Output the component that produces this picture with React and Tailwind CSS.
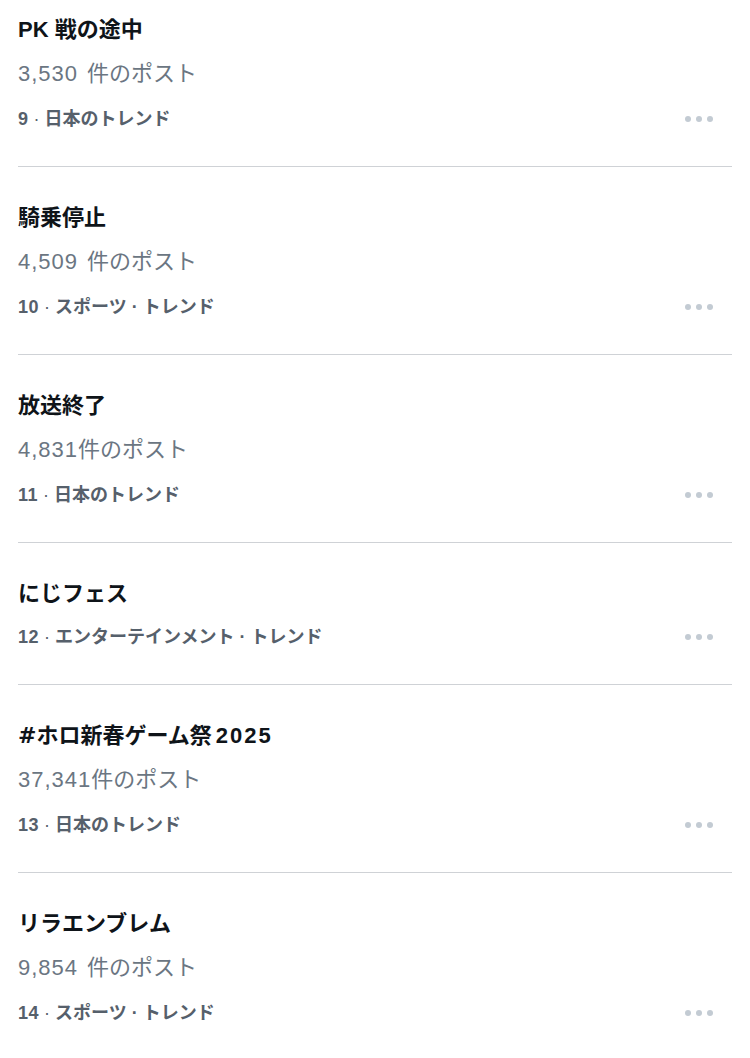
import React from 'react';

const trends = [
  { title: 'PK 戦の途中', num: '3,530', gap: true, meta: ['9', '日本のトレンド'] },
  { title: '騎乗停止', num: '4,509', gap: true, meta: ['10', 'スポーツ', 'トレンド'] },
  { title: '放送終了', num: '4,831', gap: false, meta: ['11', '日本のトレンド'] },
  { title: 'にじフェス', num: null, meta: ['12', 'エンターテインメント', 'トレンド'] },
  { title: 'ホロ新春ゲーム祭', hash: true, year: '2025', num: '37,341', gap: false, meta: ['13', '日本のトレンド'] },
  { title: 'リラエンブレム', num: '9,854', gap: true, meta: ['14', 'スポーツ', 'トレンド'] },
];

function MoreDots() {
  return (
    <div className="flex items-center gap-[5px]">
      <span className="w-[6px] h-[6px] rounded-full bg-[#c3cbd3]" />
      <span className="w-[6px] h-[6px] rounded-full bg-[#c3cbd3]" />
      <span className="w-[6px] h-[6px] rounded-full bg-[#c3cbd3]" />
    </div>
  );
}

function Meta({ parts }) {
  const [rank, ...labels] = parts;
  return (
    <span className="text-[18px] font-bold text-[#56606b]">
      <span className="tracking-[0.5px]">{rank}</span>
      {labels.map((l, i) => (
        <React.Fragment key={i}>
          <span className={`mx-[5px] ${i === 0 ? 'font-normal' : 'font-bold'}`}>·</span>
          {l}
        </React.Fragment>
      ))}
    </span>
  );
}

export default function App() {
  return (
    <div
      className="w-[750px] h-[1058px] bg-white overflow-hidden"
      style={{ fontFamily: '"Liberation Sans", "Noto Sans CJK JP", sans-serif' }}
    >
      <div className="px-[18px] -mt-[21px]">
        {trends.map((t, i) => (
          <div
            key={i}
            className={`pt-[28px] pb-[25px] border-b border-[#cfd2d6] ${
              i === trends.length - 1 ? 'border-b-0' : ''
            }`}
          >
            <div className="h-[44px] flex items-center text-[22px] font-bold text-[#0f1419]">
              {t.hash && <span className="font-['DejaVu_Sans']">#</span>}
              {t.title}
              {t.year && <span className="ml-[4px] tracking-[2px]">{t.year}</span>}
            </div>
            {t.num && (
              <div className="h-[44px] flex items-center text-[22px] text-[#6b7682]">
                <span className="tracking-[1px]">{t.num}</span>
                {t.gap && <span className="inline-block w-[9px]" />}
                件のポスト
              </div>
            )}
            <div
              className={`h-[44px] flex items-center justify-between pr-[19px] ${t.num ? 'mt-[2px]' : ''}`}
            >
              <Meta parts={t.meta} />
              <MoreDots />
            </div>
          </div>
        ))}
      </div>
    </div>
  );
}
